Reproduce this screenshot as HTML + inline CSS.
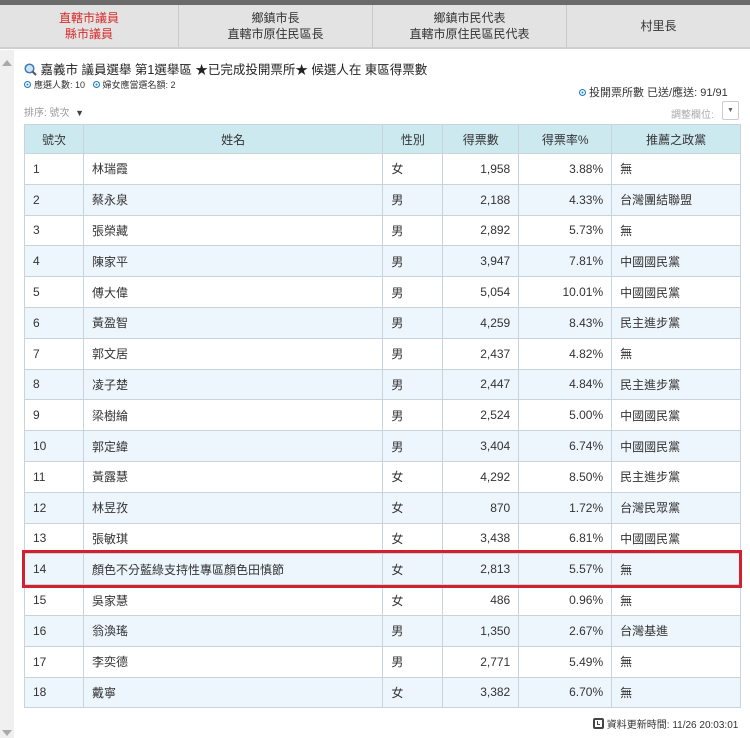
<!DOCTYPE html>
<html><head><meta charset="utf-8">
<style>
*{margin:0;padding:0;box-sizing:border-box}
body{width:750px;height:738px;overflow:hidden;background:#fff;font-family:"Liberation Sans","Noto Sans CJK TC",sans-serif;color:#333;position:relative}
.topbar{position:absolute;left:0;top:0;width:750px;height:5px;background:#6b6b6b}
.tabs{position:absolute;left:0;top:5px;width:750px;height:44px;background:#e3e3e3;border-bottom:2px solid #cfcfcf;display:flex}
.tab{height:42px;border-right:1px solid #c9c9c9;display:flex;flex-direction:column;justify-content:center;align-items:center;font-size:12px;line-height:16px;color:#333}
.tab.red{color:#d62b2b}
.sb{position:absolute;left:0;top:50px;width:14px;height:688px;background:#f0f0f0}
.sb .up{position:absolute;left:2px;top:10px;width:0;height:0;border-left:5px solid transparent;border-right:5px solid transparent;border-bottom:6px solid #aaa}
.sb .dn{position:absolute;left:2px;top:680px;width:0;height:0;border-left:5px solid transparent;border-right:5px solid transparent;border-top:6px solid #aaa}
.abs{position:absolute;white-space:nowrap}
.dot{display:inline-block;width:7px;height:7px;border-radius:50%;background:#1a7fc6;border:1.5px solid #1a7fc6;box-shadow:inset 0 0 0 1.5px #fff;vertical-align:0px;margin-right:3px}
table{position:absolute;left:24px;top:124px;width:717px;border-collapse:collapse;font-size:12px}
td,th{border:1px solid #c8d3dc;height:30.8px;padding:0 8px}
th{background:#cde9f0;font-weight:normal;text-align:center;height:29px}
tr:nth-child(odd) td{background:#eef6fd}
td.r{text-align:right}
.hl{position:absolute;left:22px;top:550px;width:720px;height:38px;border:3px solid #d3202e}
</style></head><body>
<div class="topbar"></div>
<div class="tabs">
<div class="tab red" style="width:179px">直轄市議員<span>縣市議員</span></div>
<div class="tab" style="width:194px">鄉鎮市長<span>直轄市原住民區長</span></div>
<div class="tab" style="width:194px">鄉鎮市民代表<span>直轄市原住民區民代表</span></div>
<div class="tab" style="width:183px;border-right:none">村里長</div>
</div>
<div class="sb"><div class="up"></div><div class="dn"></div></div>
<div class="abs" style="left:24px;top:59px;font-size:12.5px;color:#222"><svg width="13" height="13" viewBox="0 0 13 13" style="vertical-align:-2px"><circle cx="5.5" cy="5.5" r="4.3" fill="#cfe3f3" stroke="#3a7ab8" stroke-width="1.5"/><line x1="8.5" y1="8.5" x2="12" y2="12" stroke="#555" stroke-width="2"/></svg> 嘉義市 議員選舉 第1選舉區 ★已完成投開票所★ 候選人在 東區得票數</div>
<div class="abs" style="left:24px;top:78px;font-size:9px;color:#333"><span class="dot"></span>應選人數: 10 &nbsp;&nbsp;<span class="dot"></span>婦女應當選名額: 2</div>
<div class="abs" style="left:579px;top:84px;font-size:11px;color:#333"><span class="dot"></span>投開票所數 已送/應送: 91/91</div>
<div class="abs" style="left:24px;top:104px;font-size:10px;color:#999">排序: 號次 &nbsp;<span style="color:#444;font-size:9px">▼</span></div>
<div class="abs" style="left:671px;top:106px;font-size:10px;color:#aaa">調整欄位:</div>
<div class="abs" style="left:722px;top:101px;width:17px;height:19px;border:1px solid #ccc;border-radius:2px;font-size:7px;color:#666;text-align:center;line-height:18px">▼</div>
<table>
<colgroup><col style="width:59px"><col style="width:300px"><col style="width:60px"><col style="width:76px"><col style="width:93px"><col style="width:129px"></colgroup>
<tr><th>號次</th><th>姓名</th><th>性別</th><th>得票數</th><th>得票率%</th><th>推薦之政黨</th></tr>
<tr><td>1</td><td>林瑞霞</td><td>女</td><td class="r">1,958</td><td class="r">3.88%</td><td>無</td></tr>
<tr><td>2</td><td>蔡永泉</td><td>男</td><td class="r">2,188</td><td class="r">4.33%</td><td>台灣團結聯盟</td></tr>
<tr><td>3</td><td>張榮藏</td><td>男</td><td class="r">2,892</td><td class="r">5.73%</td><td>無</td></tr>
<tr><td>4</td><td>陳家平</td><td>男</td><td class="r">3,947</td><td class="r">7.81%</td><td>中國國民黨</td></tr>
<tr><td>5</td><td>傅大偉</td><td>男</td><td class="r">5,054</td><td class="r">10.01%</td><td>中國國民黨</td></tr>
<tr><td>6</td><td>黃盈智</td><td>男</td><td class="r">4,259</td><td class="r">8.43%</td><td>民主進步黨</td></tr>
<tr><td>7</td><td>郭文居</td><td>男</td><td class="r">2,437</td><td class="r">4.82%</td><td>無</td></tr>
<tr><td>8</td><td>凌子楚</td><td>男</td><td class="r">2,447</td><td class="r">4.84%</td><td>民主進步黨</td></tr>
<tr><td>9</td><td>梁樹綸</td><td>男</td><td class="r">2,524</td><td class="r">5.00%</td><td>中國國民黨</td></tr>
<tr><td>10</td><td>郭定緯</td><td>男</td><td class="r">3,404</td><td class="r">6.74%</td><td>中國國民黨</td></tr>
<tr><td>11</td><td>黃露慧</td><td>女</td><td class="r">4,292</td><td class="r">8.50%</td><td>民主進步黨</td></tr>
<tr><td>12</td><td>林昱孜</td><td>女</td><td class="r">870</td><td class="r">1.72%</td><td>台灣民眾黨</td></tr>
<tr><td>13</td><td>張敏琪</td><td>女</td><td class="r">3,438</td><td class="r">6.81%</td><td>中國國民黨</td></tr>
<tr><td>14</td><td>顏色不分藍綠支持性專區顏色田慎節</td><td>女</td><td class="r">2,813</td><td class="r">5.57%</td><td>無</td></tr>
<tr><td>15</td><td>吳家慧</td><td>女</td><td class="r">486</td><td class="r">0.96%</td><td>無</td></tr>
<tr><td>16</td><td>翁渙瑤</td><td>男</td><td class="r">1,350</td><td class="r">2.67%</td><td>台灣基進</td></tr>
<tr><td>17</td><td>李奕德</td><td>男</td><td class="r">2,771</td><td class="r">5.49%</td><td>無</td></tr>
<tr><td>18</td><td>戴寧</td><td>女</td><td class="r">3,382</td><td class="r">6.70%</td><td>無</td></tr>
</table>
<div class="hl"></div>
<div class="abs" style="left:593px;top:716px;font-size:10px;color:#333"><span style="display:inline-block;width:11px;height:11px;border:2px solid #444;border-radius:2px;background:#fff;vertical-align:-1px;position:relative"><span style="position:absolute;left:2px;top:1px;width:3px;height:4px;border-left:1px solid #444;border-bottom:1px solid #444"></span></span> 資料更新時間: 11/26 20:03:01</div>
</body></html>
